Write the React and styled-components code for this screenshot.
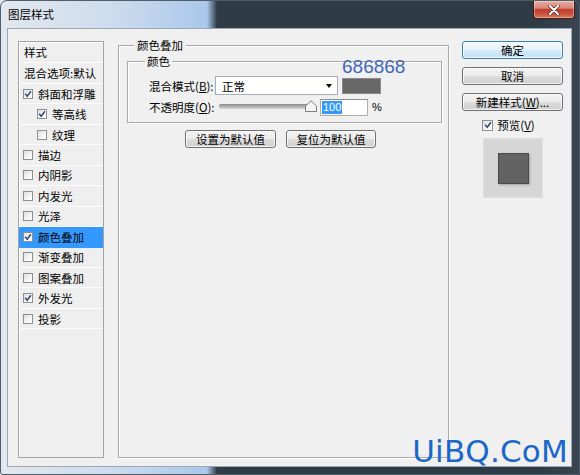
import React from 'react';
import styled, { createGlobalStyle } from 'styled-components';

const FONT = `"Noto Sans CJK SC", "Microsoft YaHei", sans-serif`;
const FRAME_BG = `linear-gradient(90deg, #e3e7ed 0px, #cddcee 110px, #aac8ea 206px, #2f3b45 216px, #2f3b45 540px, #3a4550 100%)`;

const Global = createGlobalStyle`
  html, body { margin: 0; padding: 0; }
  body {
    width: 580px; height: 475px; overflow: hidden;
    background: ${FRAME_BG};
    font-family: ${FONT};
    color: #000;
  }
`;

const Window = styled.div`
  position: relative;
  width: 580px; height: 475px;
  box-sizing: border-box;
  display: flex; flex-direction: column;
  border: 1px solid #4f5e6d;
  border-radius: 7px 7px 3px 3px;
  background: ${FRAME_BG};
  padding: 0 7px 7px 6px;
`;

const TitleBar = styled.div`
  height: 27px;
  margin: 0 -7px 0 -6px;
  display: flex; align-items: flex-start;
`;

const Title = styled.div`
  padding: 6px 0 0 7px;
  font-size: 11.5px; line-height: 15px;
  color: #000;
`;

const CloseBtn = styled.div`
  margin-left: auto; margin-right: 4px;
  width: 42px; height: 18px; box-sizing: border-box;
  border: 1px solid #4a1a16; border-top: none;
  border-radius: 0 0 4px 4px;
  background: linear-gradient(#e9aca2 0%, #d9877a 42%, #c2402f 50%, #c9503c 75%, #db7a5f 100%);
  box-shadow: inset 0 0 0 1px rgba(255,255,255,.35);
  display: flex; align-items: center; justify-content: center;
`;

const Client = styled.div`
  flex: 1;
  border: 1px solid #98a8b8;
  background: #f0f0f0;
  display: flex; align-items: stretch;
  padding: 12px 8px 8px 10px;
`;

/* ---------- left list ---------- */
const List = styled.div`
  width: 86px; flex: none; box-sizing: border-box;
  border: 1px solid #a3a3a3;
  box-shadow: inset 1px 1px 0 #fff;
  background: #efefef;
  display: flex; flex-direction: column;
`;

const ListHead = styled.div`
  height: 21px; box-sizing: border-box;
  border-bottom: 1px solid #fcfcfc;
  padding-left: 5px;
  display: flex; align-items: center;
  font-size: 11.5px; white-space: nowrap;
`;

const Item = styled.div`
  height: 20.45px; box-sizing: border-box;
  border-bottom: 1px solid ${p => (p.$selected ? '#3399ff' : '#fcfcfc')};
  padding-left: ${p => (p.$indent ? 18 : 4)}px;
  display: flex; align-items: center; gap: 5px;
  background: ${p => (p.$selected ? '#3399ff' : 'transparent')};
  font-size: 11.5px; white-space: nowrap;
`;

const Box = styled.span`
  width: ${p => p.$size || 10}px; height: ${p => p.$size || 10}px;
  flex: none; box-sizing: border-box;
  border: 1px solid #8e8f8f;
  background: linear-gradient(135deg, #dedede 0%, #f6f6f6 60%, #ffffff 100%);
  display: inline-flex; align-items: center; justify-content: center;
`;

function Check({ checked, size }) {
  return (
    <Box $size={size}>
      {checked && (
        <svg width="8" height="8" viewBox="0 0 8 8">
          <path d="M1.2 3.8 L3.2 6.2 L6.9 1.2" stroke="#34457a" strokeWidth="1.5" fill="none" />
        </svg>
      )}
    </Box>
  );
}

/* ---------- middle group ---------- */
const OuterGroup = styled.fieldset`
  width: 331px; flex: none; box-sizing: border-box;
  margin: -2px 0 0 14px; min-width: 0;
  border: 1px solid #a9a9a9;
  box-shadow: inset 1px 1px 0 #fff, 1px 1px 0 #fff;
  padding: 3px 6px 0 8px;
`;

const Legend = styled.legend`
  font-size: 11.5px; line-height: 13px;
  padding: 0 ${p => p.$pad ?? 3}px;
  margin-left: ${p => p.$ml}px;
  background: #f0f0f0;
  white-space: nowrap;
`;

const InnerGroup = styled.fieldset`
  margin: 0; min-width: 0; box-sizing: border-box;
  border: 1px solid #a9a9a9;
  box-shadow: inset 1px 1px 0 #fff, 1px 1px 0 #fff;
  padding: 8px 0 6px 21px;
  display: flex; flex-direction: column; gap: 3px;
`;

const FieldRow = styled.div`
  height: ${p => p.$h}px;
  display: flex; align-items: center;
`;

const Label = styled.span`
  width: 66px; flex: none;
  font-size: 11.5px; white-space: nowrap;
  u { text-decoration: underline; }
`;

const Select = styled.div`
  width: 123px; height: 19px; box-sizing: border-box;
  border: 1px solid #a5acb5;
  background: #fff;
  padding: 0 5px 0 6px;
  display: flex; align-items: center; justify-content: space-between;
  font-size: 11.5px;
`;

const Arrow = styled.span`
  width: 0; height: 0;
  border-left: 3.5px solid transparent;
  border-right: 3.5px solid transparent;
  border-top: 4px solid #000;
  margin-top: 1px;
`;

const ColorChip = styled.div`
  width: 39px; height: 16px; margin-left: 4px; box-sizing: border-box;
  background: #686868;
  border: 1px solid #8a8a8a;
`;

const Slider = styled.div`
  position: relative;
  width: 98px; height: 18px; margin-left: 4px; flex: none;
  display: flex; align-items: center;
`;

const Track = styled.div`
  width: 94px; height: 5px; margin-top: -2px;
  border-radius: 2px;
  background: linear-gradient(#8a8a8a, #b9b9b9 60%, #dadada);
`;

const Thumb = styled.svg`
  position: absolute; left: 86px; top: 2px;
`;

const NumInput = styled.div`
  width: 48px; height: 17px; margin-left: 3px; box-sizing: border-box;
  border: 1px solid #abadb3; border-top-color: #8e9097;
  background: #fff;
  padding-left: 1px;
  display: flex; align-items: center;
  font: 11px/13px "Liberation Sans", Arial, sans-serif;
`;

const Sel = styled.span`
  background: #3399ff; color: #fff; padding: 0 1px;
`;

const Percent = styled.span`
  margin-left: 4px;
  font: 11px "Liberation Sans", Arial, sans-serif;
`;

const ButtonRow = styled.div`
  margin-top: 7px;
  padding-left: 58px;
  display: flex; gap: 10px;
`;

const Btn = styled.div`
  width: ${p => p.$w}px; height: 18px; box-sizing: border-box;
  border: 1px solid ${p => (p.$default ? '#3c7fb1' : '#707070')};
  border-radius: 3px;
  background: ${p =>
    p.$default
      ? 'linear-gradient(#f4fafe 0%, #e4f2fb 50%, #d2e9f8 51%, #c4e1f5 100%)'
      : 'linear-gradient(#f3f3f3 0%, #ebebeb 50%, #dddddd 51%, #cfcfcf 100%)'};
  box-shadow: inset 0 0 0 1px rgba(255,255,255,.75);
  display: flex; align-items: center; justify-content: center;
  font-size: 11.5px; line-height: 14px; white-space: nowrap;
  u { text-decoration: underline; }
`;

/* ---------- right column ---------- */
const Side = styled.div`
  width: 101px; flex: none; margin-left: 13px;
  display: flex; flex-direction: column; align-items: center; gap: 8px;
`;

const PreviewCheck = styled.div`
  height: 12px; margin-top: 0; margin-right: 8px;
  display: flex; align-items: center; gap: 4px;
  font-size: 11.5px; white-space: nowrap;
  u { text-decoration: underline; }
`;

const Preview = styled.div`
  width: 60px; height: 60px; box-sizing: border-box; margin-top: -1px; margin-left: 1px;
  background: #d6d6d6;
  border: 1px solid #e0e0e0;
  display: flex; align-items: center; justify-content: center;
`;

const PreviewSwatch = styled.div`
  width: 31px; height: 31px; box-sizing: border-box;
  background: #636363;
  border: 1px solid #4b4b4b;
  box-shadow: 1px 1px 2px rgba(0,0,0,.25);
`;

/* ---------- overlays ---------- */
const Annotation = styled.div`
  position: absolute; left: 341px; top: 56px;
  font: 19px/19px "Liberation Sans", Arial, sans-serif;
  color: #4466bb;
`;

const Watermark = styled.div`
  position: absolute; right: 11px; top: 435px;
  font: 31px/31px "DejaVu Sans", Verdana, sans-serif;
  color: #1b67c9;
  letter-spacing: 0.2px;
`;

const items = [
  { t: '斜面和浮雕', c: true },
  { t: '等高线', c: true, i: true },
  { t: '纹理', c: false, i: true },
  { t: '描边' },
  { t: '内阴影' },
  { t: '内发光' },
  { t: '光泽' },
  { t: '颜色叠加', c: true, s: true },
  { t: '渐变叠加' },
  { t: '图案叠加' },
  { t: '外发光', c: true },
  { t: '投影' },
];

export default function App() {
  return (
    <>
      <Global />
      <Window>
        <TitleBar>
          <Title>图层样式</Title>
          <CloseBtn>
            <svg width="12" height="10" viewBox="0 0 12 10">
              <path d="M2 1 L10 9 M10 1 L2 9" stroke="#5a2a26" strokeWidth="3.4" strokeLinecap="round" />
              <path d="M2 1 L10 9 M10 1 L2 9" stroke="#ffffff" strokeWidth="2" strokeLinecap="round" />
            </svg>
          </CloseBtn>
        </TitleBar>
        <Client>
          <List>
            <ListHead>样式</ListHead>
            <ListHead>混合选项:默认</ListHead>
            {items.map(it => (
              <Item key={it.t} $indent={it.i} $selected={it.s}>
                <Check checked={it.c} />
                <span>{it.t}</span>
              </Item>
            ))}
          </List>

          <OuterGroup>
            <Legend $ml={7}>颜色叠加</Legend>
            <InnerGroup>
              <Legend $ml={-4} $pad={2}>颜色</Legend>
              <FieldRow $h={19}>
                <Label>混合模式(<u>B</u>):</Label>
                <Select>
                  <span>正常</span>
                  <Arrow />
                </Select>
                <ColorChip />
              </FieldRow>
              <FieldRow $h={18}>
                <Label>不透明度(<u>O</u>):</Label>
                <Slider>
                  <Track />
                  <Thumb width="12" height="12" viewBox="0 0 12 12">
                    <path d="M0.5 11.5 V6 L6 0.8 L11.5 6 V11.5 Z" fill="#f4f4f4" stroke="#7c7c7c" />
                  </Thumb>
                </Slider>
                <NumInput><Sel>100</Sel></NumInput>
                <Percent>%</Percent>
              </FieldRow>
            </InnerGroup>
            <ButtonRow>
              <Btn $w={91}>设置为默认值</Btn>
              <Btn $w={90}>复位为默认值</Btn>
            </ButtonRow>
          </OuterGroup>

          <Side>
            <Btn $w={101} $default>确定</Btn>
            <Btn $w={101}>取消</Btn>
            <Btn $w={101}>新建样式(<u>W</u>)...</Btn>
            <PreviewCheck>
              <Check checked size={11} />
              <span>预览(<u>V</u>)</span>
            </PreviewCheck>
            <Preview>
              <PreviewSwatch />
            </Preview>
          </Side>
        </Client>
        <Annotation>686868</Annotation>
        <Watermark>UiBQ.CoM</Watermark>
      </Window>
    </>
  );
}
